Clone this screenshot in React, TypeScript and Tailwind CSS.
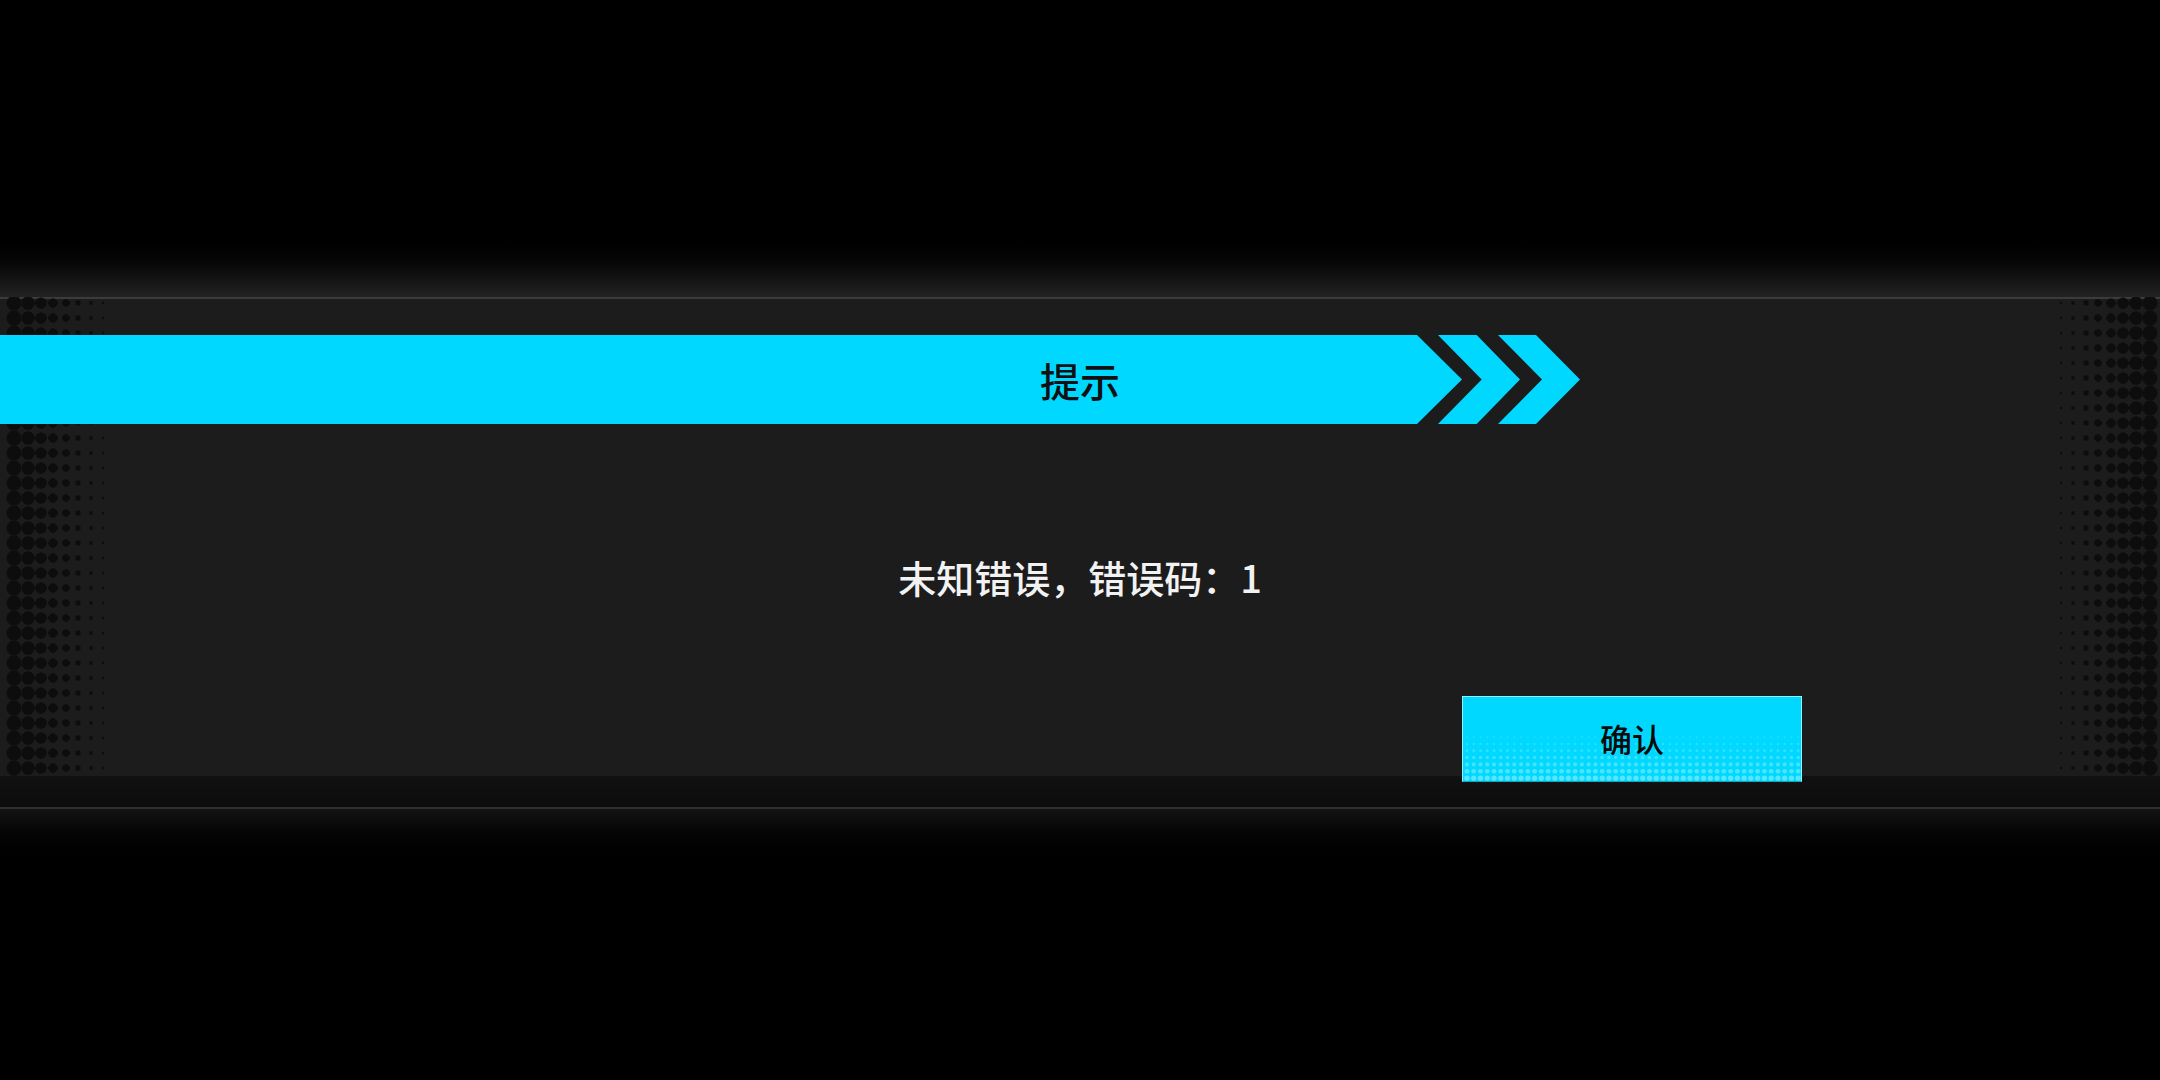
import React from 'react';

const CYAN = '#00d8ff';

// halftone dot columns on the panel edges
const leftCols = [
  { x: 14, r: 7.4 },
  { x: 28, r: 6.6 },
  { x: 41, r: 5.6 },
  { x: 53, r: 4.6 },
  { x: 66, r: 3.6 },
  { x: 78, r: 2.7 },
  { x: 91, r: 1.9 },
  { x: 103, r: 1.2 },
];
const rows = Array.from({ length: 33 }, (_, i) => 6 + i * 15);

function Halftone({ side }: { side: 'left' | 'right' }) {
  const cols = side === 'left' ? leftCols : leftCols.map((c) => ({ x: 114 - c.x, r: c.r }));
  return (
    <svg
      className={`absolute top-0 h-[479px] w-[110px] ${side === 'left' ? 'left-0' : 'right-0'}`}
      viewBox="0 0 110 479"
      aria-hidden
    >
      <defs>
        <filter id={`soft-${side}`}>
          <feGaussianBlur stdDeviation="0.5" />
        </filter>
      </defs>
      <g fill="#0c0c0c" filter={`url(#soft-${side})`}>
        {rows.map((y) =>
          cols.map((c) => <circle key={`${c.x}-${y}`} cx={c.x} cy={y} r={c.r} />)
        )}
      </g>
    </svg>
  );
}

function Chevrons() {
  return (
    <svg className="ml-[-24px] h-[89px] w-[142px] shrink-0" viewBox="0 0 142 89" aria-hidden>
      <polygon points="0,0 38.7,0 82,44.5 38.7,89 0,89 43.7,44.5" fill={CYAN} />
      <polygon points="60,0 98,0 142,44.5 98,89 60,89 104,44.5" fill={CYAN} />
    </svg>
  );
}

function ButtonDots() {
  const dotRows = Array.from({ length: 7 }, (_, i) => 41 + i * 7);
  const dotCols = Array.from({ length: 50 }, (_, i) => 4 + i * 6.8);
  return (
    <svg className="absolute inset-0 h-full w-full" viewBox="0 0 340 86" preserveAspectRatio="none" aria-hidden>
      {dotRows.map((y, ri) =>
        dotCols.map((x) => (
          <circle
            key={`${x}-${y}`}
            cx={x}
            cy={y}
            r={0.9 + ri * 0.3}
            fill="#7eeeff"
            opacity={0.25 + ri * 0.07}
          />
        ))
      )}
    </svg>
  );
}

export default function App() {
  return (
    <div className="flex h-[1080px] w-full flex-col overflow-hidden bg-black font-['Noto_Sans_CJK_SC','Noto_Sans',sans-serif]">
      <div className="h-[227px] shrink-0" />
      <div className="h-[70px] shrink-0 bg-gradient-to-b from-black to-[#232323]" />

      {/* Dialog panel */}
      <section className="relative shrink-0">
        <div className="h-[2px] bg-[#3b3b3b]" />
        <div className="relative flex h-[477px] flex-col bg-[#1c1c1c]">
          <div className="absolute inset-x-0 top-[-2px]">
            <Halftone side="left" />
            <Halftone side="right" />
          </div>

          {/* Title banner */}
          <div className="relative mt-[36px] grid h-[89px]">
            <div className="flex [grid-area:1/1]">
              <div className="h-[89px] w-[1462px] shrink-0 bg-[#00d8ff] [clip-path:polygon(0_0,1417px_0,1462px_50%,1417px_100%,0_100%)]" />
              <Chevrons />
            </div>
            <div className="relative z-10 flex items-center justify-center [grid-area:1/1]">
              <h2 className="text-[40px] font-medium leading-none text-[#111]">提示</h2>
            </div>
          </div>

          {/* Message */}
          <p className="relative mt-[125px] text-center text-[38px] font-medium leading-[56px] text-[#f2f2f2]">
            未知错误，错误码：1
          </p>

          {/* Confirm button */}
          <div className="relative z-10 mt-[91px] flex justify-end pr-[358px]">
            <button className="relative h-[86px] w-[340px] overflow-hidden border border-[#95efff] border-b-[#1aa6bf] bg-[#00d8ff]">
              <ButtonDots />
              <span className="relative text-[32px] font-medium leading-none text-[#0a0a0a]">确认</span>
            </button>
          </div>
        </div>
      </section>

      <div className="h-[31px] shrink-0 bg-gradient-to-b from-[#111111] to-[#0c0c0c]" />
      <div className="h-[2px] shrink-0 bg-[#2e2e2e]" />
      <div className="h-[60px] shrink-0 bg-gradient-to-b from-[#141414] to-black" />
    </div>
  );
}
